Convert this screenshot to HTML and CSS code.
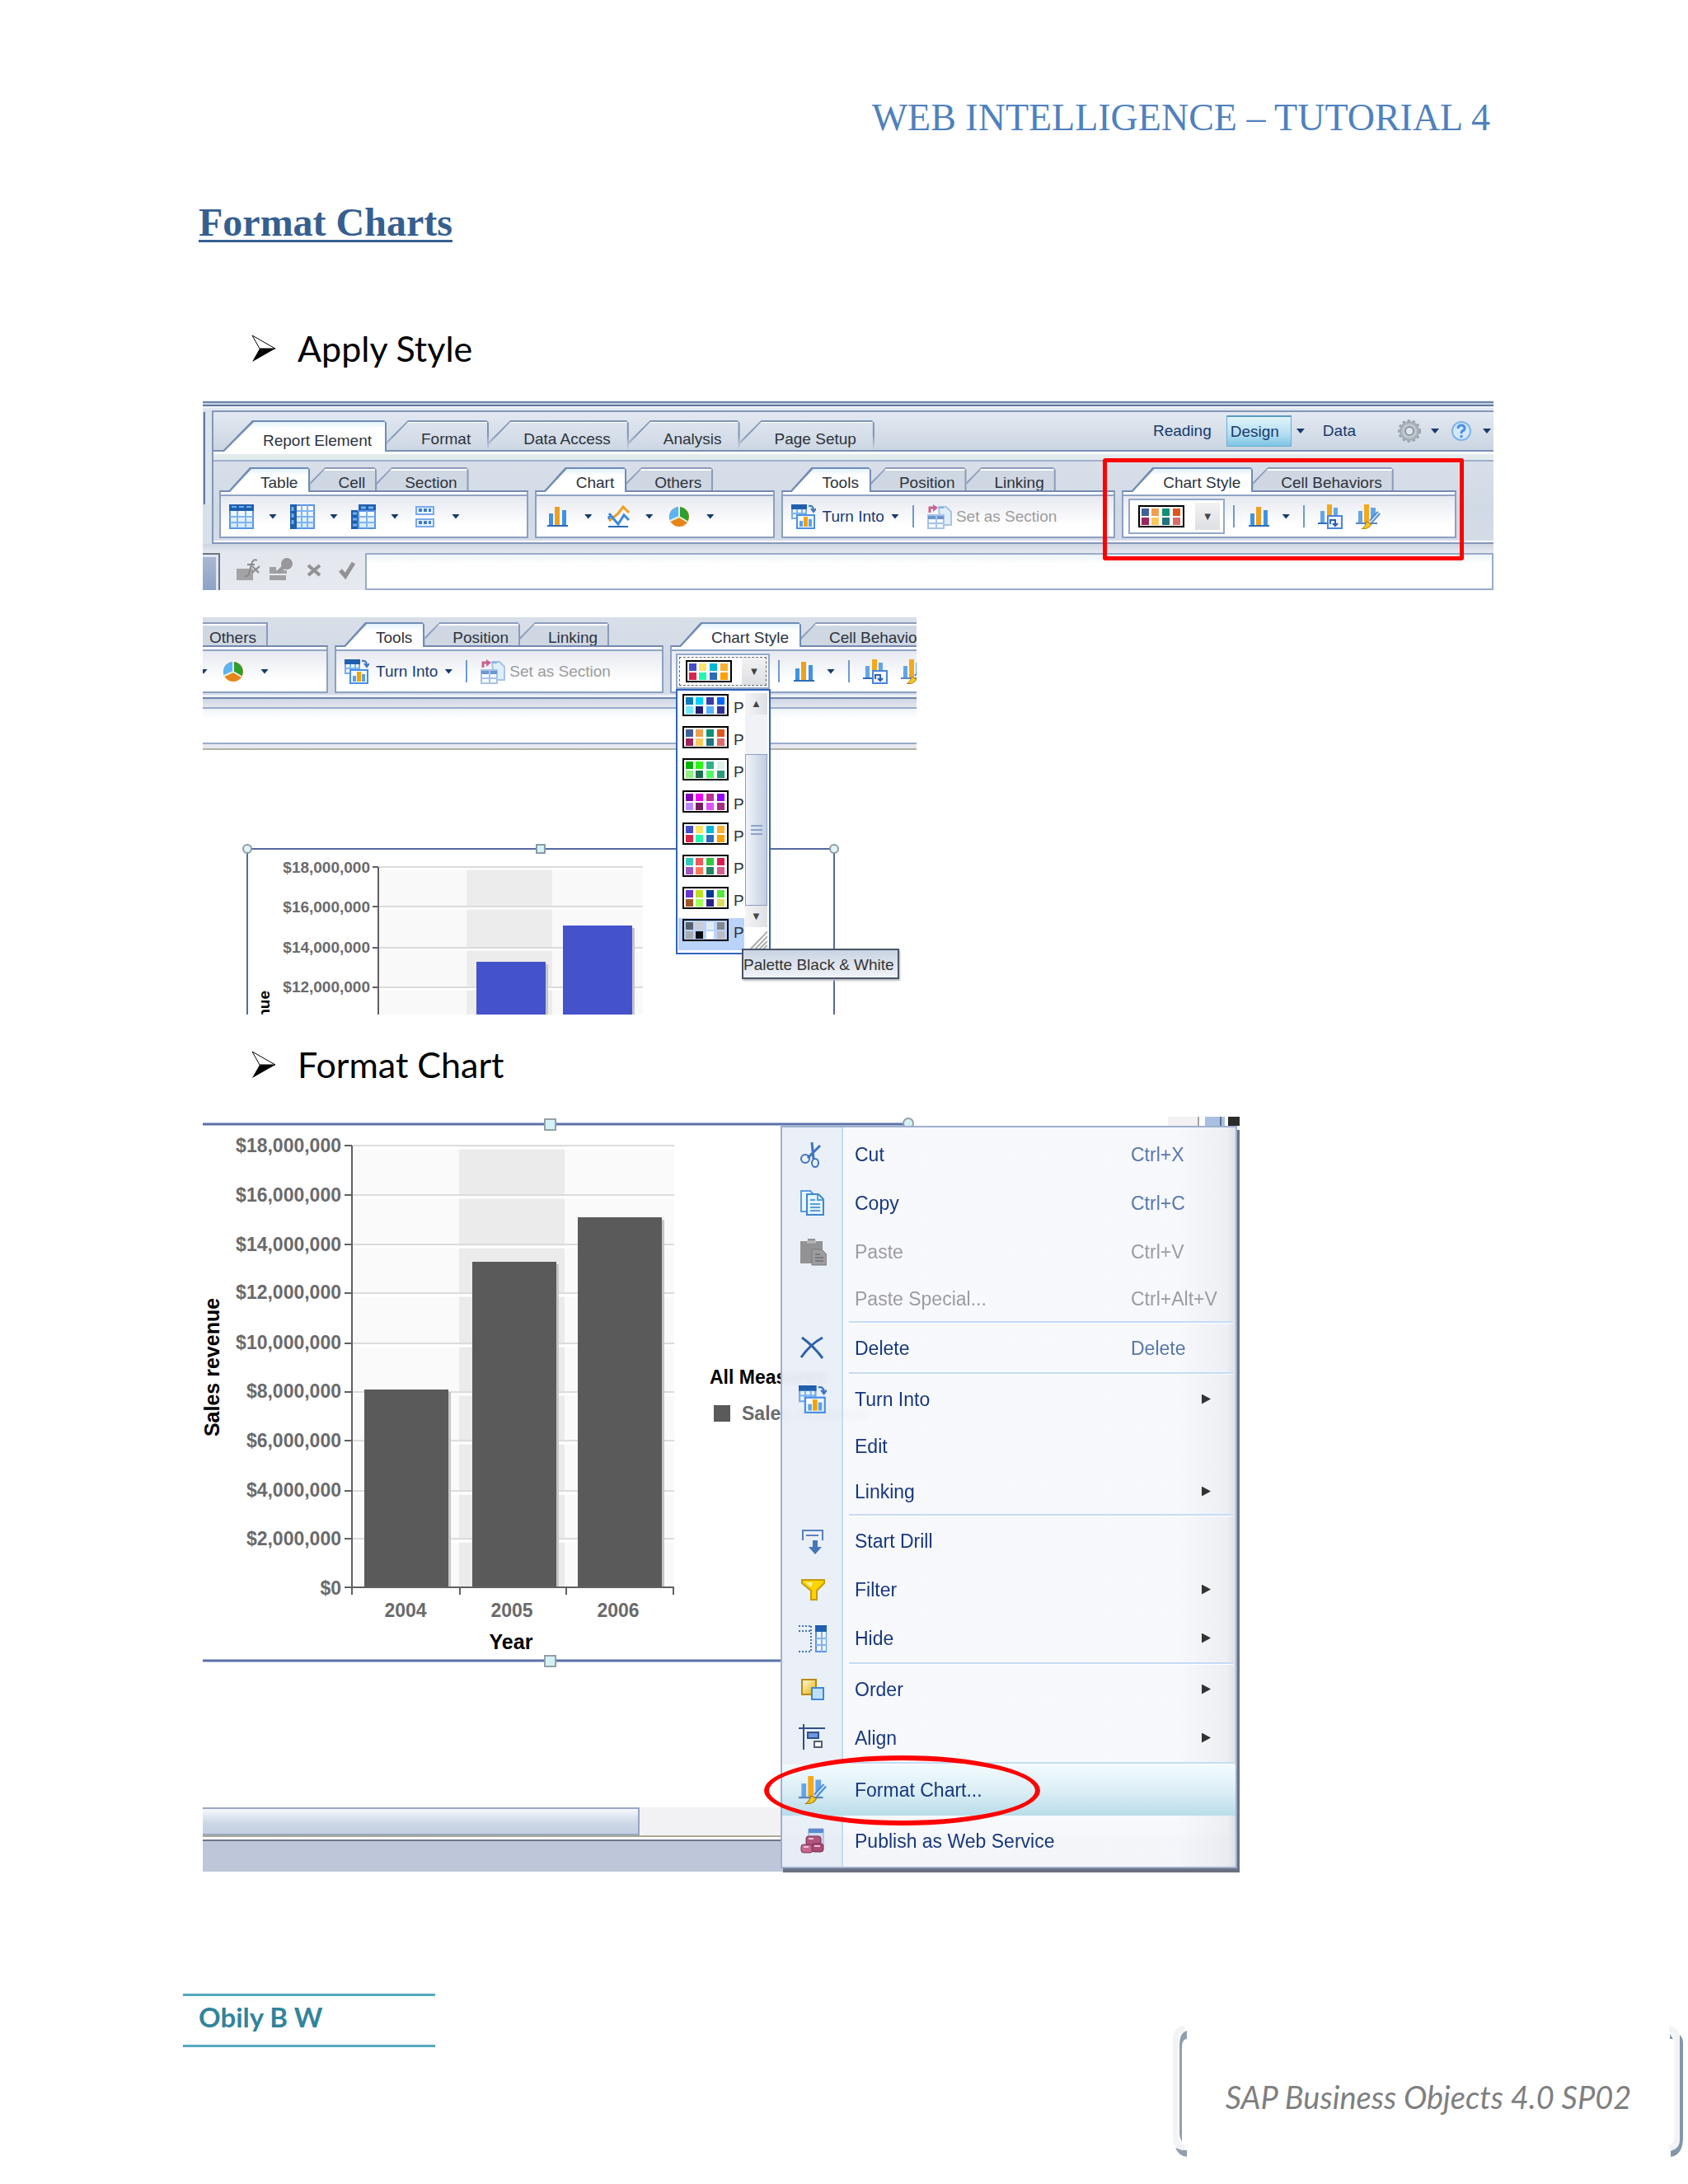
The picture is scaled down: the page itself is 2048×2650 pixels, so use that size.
FILE: index.html
```html
<!DOCTYPE html>
<html lang="en">
<head>
<meta charset="utf-8">
<meta name="viewport" content="width=device-width, initial-scale=1">
<title>Web Intelligence – Tutorial 4</title>
<link rel="stylesheet" href="styles.css">
</head>
<body>
<svg class="defs" width="0" height="0" aria-hidden="true">
  <defs>
    <linearGradient id="gCell" x1="0" y1="0" x2="0" y2="1"><stop offset="0" stop-color="#ffffff"/><stop offset="1" stop-color="#cfe8fb"/></linearGradient>
    <linearGradient id="gGold" x1="0" y1="0" x2="1" y2="1"><stop offset="0" stop-color="#fffbe0"/><stop offset="1" stop-color="#e6b000"/></linearGradient>
    <radialGradient id="gGear"><stop offset="0" stop-color="#f4f6f8"/><stop offset="1" stop-color="#a6b0ba"/></radialGradient>
  </defs>
  <symbol id="i-table" viewBox="0 0 30 30"><rect x="1" y="1" width="28" height="28" fill="url(#gCell)" stroke="#5b93e6" stroke-width="2"/><rect x="0" y="0" width="30" height="8" fill="#1f5fae"/><path d="M3 3h6M12 3h6M21 3h6" stroke="#6fb0f0" stroke-width="2"/><path d="M10 8v21M20 8v21M1 15h28M1 22h28" stroke="#7fb4f0" stroke-width="2"/></symbol>
  <symbol id="i-vtable" viewBox="0 0 30 30"><rect x="1" y="1" width="28" height="28" fill="url(#gCell)" stroke="#5b93e6" stroke-width="2"/><rect x="0" y="0" width="8" height="30" fill="#1f5fae"/><path d="M3 3v5M3 11v5M3 19v5" stroke="#6fb0f0" stroke-width="3"/><path d="M14 1v28M21 1v28M8 8h21M8 15h21M8 22h21" stroke="#7fb4f0" stroke-width="2"/></symbol>
  <symbol id="i-crosstab" viewBox="0 0 30 30"><path d="M9 0h21v8h-21zM0 7h9v23h-9z" fill="#1f5fae"/><rect x="9" y="8" width="20" height="21" fill="url(#gCell)" stroke="#5b93e6" stroke-width="2"/><path d="M12 4h6M21 4h6M2 11h5M2 18h5M2 25h5" stroke="#6fb0f0" stroke-width="3"/><path d="M19 8v21M9 15h20M9 22h20" stroke="#7fb4f0" stroke-width="2"/></symbol>
  <symbol id="i-form" viewBox="0 0 30 30"><path d="M5 3h21v9H5zM5 18h21v9H5z" fill="#eaf5ff" stroke="#7aa9ea" stroke-width="2"/><path d="M8 7h4M14 7h4M20 7h3M8 22h4M14 22h4M20 22h3" stroke="#3f7cc8" stroke-width="4"/></symbol>
  <symbol id="i-bars" viewBox="0 0 30 30"><path d="M5 11h5v14H5zM21 7h5v18h-5z" fill="#3f92e6"/><path d="M12 3h6v22h-6z" fill="#f0a020"/><path d="M3 26h25" stroke="#2b6cb8" stroke-width="2"/></symbol>
  <symbol id="i-line" viewBox="0 0 30 30"><path d="M4 20l5-4 6-5 6-8 7 7" fill="none" stroke="#f0a020" stroke-width="3"/><path d="M4 11l5 6 6 7 7-11 6 6M4 18v-4" fill="none" stroke="#3f88dc" stroke-width="3"/><path d="M3 27h24" stroke="#2b6cb8" stroke-width="2"/></symbol>
  <symbol id="i-pie" viewBox="0 0 30 30"><circle cx="15" cy="15" r="12" fill="#e8851a"/><path d="M15 15V3a12 12 0 0 1 10 18z" fill="#2e9e2e"/><path d="M15 15V3A12 12 0 0 0 4 20z" fill="#5db4f2"/><path d="M15 3v12l10 6M15 15L4 20" fill="none" stroke="#e6f6e0" stroke-width="2"/></symbol>
  <symbol id="i-turn" viewBox="0 0 30 30"><rect x="1" y="1" width="17" height="16" fill="#eaf5ff" stroke="#7aa9ea" stroke-width="2"/><path d="M0 0h19v6H0z" fill="#1f5fae"/><path d="M7 6v11M13 6v11M1 11h17" stroke="#7fb4f0" stroke-width="2"/><path d="M21 2q6-1 6 5M24 5l3 4 3-4" fill="none" stroke="#3a74c4" stroke-width="2"/><rect x="7" y="13" width="21" height="16" fill="#f4faff" stroke="#4a90e8" stroke-width="2"/><path d="M10 20h4v7h-4zM21 18h4v9h-4z" fill="#5aa3ea"/><path d="M15 15h5v12h-5z" fill="#f5a300"/></symbol>
  <symbol id="i-setsec" viewBox="0 0 30 30"><path d="M14 3h9l6 6v16H16z" fill="#dfeefa" stroke="#a9c2e4" stroke-width="2"/><path d="M14 4h6" stroke="#7fb4f0" stroke-width="2"/><path d="M3 10V4h5" fill="none" stroke="#c8648c" stroke-width="3"/><path d="M7 0l6 4-6 5z" fill="#c8648c"/><rect x="1" y="13" width="19" height="16" fill="#f4faff" stroke="#a9c2e4" stroke-width="2"/><path d="M1 16h19" stroke="#6a96d2" stroke-width="4"/><path d="M11 13v16M1 23h19" stroke="#a9c2e4" stroke-width="2"/></symbol>
  <symbol id="i-barsexp" viewBox="0 0 30 30"><path d="M3 8h5v14H3zM19 4h5v12h-5z" fill="#62a6e8"/><path d="M11 0h6v22h-6z" fill="#f5a81c"/><path d="M0 23h14" stroke="#2b6cb8" stroke-width="2"/><rect x="12" y="14" width="17" height="15" fill="#f0f7ff" stroke="#4a86d8" stroke-width="2"/><path d="M15 24v-5h6v6M18 23l3 3 3-3" fill="none" stroke="#2f5fa8" stroke-width="2"/></symbol>
  <symbol id="i-barsfmt" viewBox="0 0 30 30"><path d="M3 8h5v14H3zM18 4h6v14h-6z" fill="#62a6e8"/><path d="M10 0h6v22h-6z" fill="#f5a81c"/><path d="M0 23h26" stroke="#5b86c0" stroke-width="2"/><path d="M28 10l-10 11" stroke="#3f7fd0" stroke-width="5"/><path d="M28 10l-10 11" stroke="#bfe0fb" stroke-width="2"/><path d="M13 21l6 3q-3 6-12 6 5-3 6-9z" fill="#f7c81e" stroke="#a87a10" stroke-width="1"/></symbol>
  <symbol id="i-gear" viewBox="0 0 30 30"><circle cx="15" cy="15" r="12" fill="none" stroke="#98a2ac" stroke-width="4" stroke-dasharray="3 3"/><circle cx="15" cy="15" r="11" fill="url(#gGear)" stroke="#a2acb6" stroke-width="2"/><circle cx="15" cy="15" r="5" fill="#dfe5ec" stroke="#8a949e" stroke-width="2"/></symbol>
  <symbol id="i-help" viewBox="0 0 30 30"><circle cx="15" cy="15" r="11" fill="#d3e8fb" stroke="#7fb2ea" stroke-width="2"/><path d="M11 12q0-4 4-4t4 4q0 2-3 3-1 1-1 3" fill="none" stroke="#4a8fe0" stroke-width="3"/><path d="M15 20v3" stroke="#4a8fe0" stroke-width="3"/></symbol>
  <symbol id="i-fx" viewBox="0 0 30 30"><path d="M1 14h20v14H1z" fill="#a3a3a5"/><path d="M26 4q-5-3-7 5l-3 11q-1 4-5 3M14 9h9M20 11l8 8M29 11l-9 8" fill="none" stroke="#8a8a8d" stroke-width="2"/></symbol>
  <symbol id="i-valid" viewBox="0 0 30 30"><path d="M1 12h8v4h13v4H1zM1 22h20v6H1z" fill="#a0a0a3"/><path d="M12 18l9-9" stroke="#98989b" stroke-width="5"/><circle cx="22" cy="8" r="7" fill="#98989b"/></symbol>
  <symbol id="i-x" viewBox="0 0 30 30"><path d="M8 10l14 12M22 10L8 22" stroke="#929295" stroke-width="4"/></symbol>
  <symbol id="i-check" viewBox="0 0 30 30"><path d="M7 16l6 7L23 7" fill="none" stroke="#929295" stroke-width="5"/></symbol>
  <symbol id="i-cut" viewBox="0 0 34 34"><path d="M16 2l2 20M26 6L11 21" stroke="#3f74c0" stroke-width="3"/><circle cx="8" cy="22" r="5" fill="none" stroke="#3f74c0" stroke-width="2"/><ellipse cx="20" cy="27" rx="4" ry="5" fill="none" stroke="#3f74c0" stroke-width="2"/></symbol>
  <symbol id="i-copy" viewBox="0 0 34 34"><path d="M3 2h11l5 5v20H3z" fill="#e8f6ff" stroke="#5a9cdc" stroke-width="2"/><path d="M10 6h14l6 6v19H10z" fill="#e2f5fd" stroke="#3f86cc" stroke-width="2"/><path d="M23 6v7h7M14 13h6M14 18h12M14 22h12M14 26h12" fill="none" stroke="#5a9cdc" stroke-width="2"/></symbol>
  <symbol id="i-paste" viewBox="0 0 34 34"><path d="M2 4h9V1h9v3h9v27H2z" fill="#929294"/><path d="M10 5h11" stroke="#b8b8ba" stroke-width="3"/><path d="M16 14h12l6 6v13H16z" fill="#9c9c9e" stroke="#7a7a7c" stroke-width="1"/><path d="M20 20h6M20 24h10M20 28h10" stroke="#7a7a7c" stroke-width="2"/></symbol>
  <symbol id="i-delete" viewBox="0 0 34 34"><path d="M4 4q14 10 25 25M29 4Q14 12 3 28" fill="none" stroke="#2f62a8" stroke-width="3"/></symbol>
  <symbol id="i-drill" viewBox="0 0 34 34"><path d="M5 16V4h24v12M9 10h15" fill="none" stroke="#5a7fc0" stroke-width="2"/><path d="M17 16h6v8h5l-8 9-8-9h5z" fill="#4577bd"/></symbol>
  <symbol id="i-filter" viewBox="0 0 34 34"><path d="M4 5h27v4l-9 9v11h-7V18L4 9z" fill="#ffd400" stroke="#c79a10" stroke-width="2"/><path d="M8 8h9l-2 6z" fill="#fff29a"/></symbol>
  <symbol id="i-hide" viewBox="0 0 34 34"><path d="M0 2h16M0 8h16M15 2v31M0 33h16" fill="none" stroke="#3f74c0" stroke-width="2" stroke-dasharray="2 2"/><rect x="21" y="2" width="13" height="31" fill="#eaf5ff" stroke="#5b93e6" stroke-width="2"/><path d="M20 1h14v8H20z" fill="#1f5fae"/><path d="M28 9v24M21 17h13M21 25h13" stroke="#7fb4f0" stroke-width="2"/></symbol>
  <symbol id="i-order" viewBox="0 0 34 34"><rect x="4" y="5" width="17" height="18" fill="url(#gGold)" stroke="#b98a10" stroke-width="2"/><rect x="16" y="15" width="14" height="14" fill="#bfe0fd" stroke="#3f86e0" stroke-width="2"/></symbol>
  <symbol id="i-align" viewBox="0 0 34 34"><path d="M0 5h32M6 0v31" stroke="#2f4f8a" stroke-width="2"/><path d="M11 10h13v7H11z" fill="#6b98e0" stroke="#33508a" stroke-width="2"/><path d="M19 21h9v7h-9z" fill="#fff" stroke="#555a70" stroke-width="2"/></symbol>
  <symbol id="i-publish" viewBox="0 0 34 34"><path d="M12 2h18v22H12z" fill="#cfdcf0" stroke="#8aa6d6" stroke-width="1"/><path d="M12 2h18v5H12z" fill="#5b8ad0"/><rect x="9" y="11" width="18" height="11" rx="3" fill="#b2557c" stroke="#7c2c50"/><rect x="3" y="21" width="14" height="10" rx="3" fill="#c4688e" stroke="#7c2c50"/><rect x="16" y="20" width="14" height="10" rx="3" fill="#a84a72" stroke="#7c2c50"/><path d="M6 24h6M19 23h7M12 14h6" stroke="#efc0d4" stroke-width="2"/></symbol>
</svg>

<header class="doc-header">Web Intelligence – Tutorial 4</header>

<main class="doc">
  <h1 class="doc-title">Format Charts</h1>

  <h2 class="point">
    <svg class="point-mark" viewBox="0 0 30 34" aria-hidden="true"><path d="M1 1l28 16H10z" fill="#fff" stroke="#000" stroke-width="1"/><path d="M10 17h19L1 33z"/></svg>
    Apply Style
  </h2>

  <figure class="shot shot-ribbon">
    <div class="window-edge"></div>
    <div class="ribbon-row">
      <div class="side-edge"></div>
      <div class="panel">
        <div class="main-tabs">
          <div class="tablist" role="tablist">
            <button class="tab tab-main is-on" role="tab" aria-selected="true">Report Element</button>
            <button class="tab tab-main" role="tab">Format</button>
            <button class="tab tab-main" role="tab">Data Access</button>
            <button class="tab tab-main" role="tab">Analysis</button>
            <button class="tab tab-main" role="tab">Page Setup</button>
          </div>
          <div class="modes">
            <button class="mode">Reading</button>
            <button class="mode mode-on">Design</button>
            <button class="caret" aria-label="Design options"></button>
            <button class="mode mode-data">Data</button>
            <button class="util" aria-label="Settings"><svg class="icon"><use href="#i-gear"/></svg><span class="caret"></span></button>
            <button class="util" aria-label="Help"><svg class="icon"><use href="#i-help"/></svg><span class="caret"></span></button>
          </div>
        </div>
        <div class="panel-strip"></div>
        <div class="groups">
          <section class="group group-a">
            <div class="tablist group-tabs" role="tablist"><button class="tab is-on" role="tab">Table</button><button class="tab" role="tab">Cell</button><button class="tab" role="tab">Section</button></div>
            <div class="group-body">
              <button class="tool" aria-label="Table"><svg class="icon"><use href="#i-table"/></svg><span class="caret"></span></button>
              <button class="tool" aria-label="Vertical table"><svg class="icon"><use href="#i-vtable"/></svg><span class="caret"></span></button>
              <button class="tool" aria-label="Cross table"><svg class="icon"><use href="#i-crosstab"/></svg><span class="caret"></span></button>
              <button class="tool" aria-label="Form"><svg class="icon"><use href="#i-form"/></svg><span class="caret"></span></button>
            </div>
          </section>
          <section class="group group-b">
            <div class="tablist group-tabs" role="tablist"><button class="tab is-on" role="tab">Chart</button><button class="tab" role="tab">Others</button></div>
            <div class="group-body">
              <button class="tool" aria-label="Column chart"><svg class="icon"><use href="#i-bars"/></svg><span class="caret"></span></button>
              <button class="tool" aria-label="Line chart"><svg class="icon"><use href="#i-line"/></svg><span class="caret"></span></button>
              <button class="tool" aria-label="Pie chart"><svg class="icon"><use href="#i-pie"/></svg><span class="caret"></span></button>
            </div>
          </section>
          <section class="group group-c">
            <div class="tablist group-tabs" role="tablist"><button class="tab is-on" role="tab">Tools</button><button class="tab" role="tab">Position</button><button class="tab" role="tab">Linking</button></div>
            <div class="group-body">
              <button class="tool tool-text"><svg class="icon"><use href="#i-turn"/></svg>Turn Into<span class="caret"></span></button>
              <span class="sep"></span>
              <button class="tool tool-text is-off" disabled><svg class="icon"><use href="#i-setsec"/></svg>Set as Section</button>
            </div>
          </section>
          <section class="group group-c">
            <div class="tablist group-tabs" role="tablist"><button class="tab is-on" role="tab">Chart Style</button><button class="tab" role="tab">Cell Behaviors</button></div>
            <div class="group-body group-style">
              <button class="combo" aria-haspopup="listbox" aria-label="Palette">
                <svg class="palette" viewBox="0 0 56 27"><rect class="frame" x="1" y="1" width="54" height="25"/><rect x="4" y="4" width="9" height="9" fill="#3d6199"/><rect x="16" y="4" width="9" height="9" fill="#eda050"/><rect x="29" y="4" width="9" height="9" fill="#0d9274"/><rect x="42" y="4" width="9" height="9" fill="#e0561c"/><rect x="4" y="15" width="9" height="9" fill="#9c245e"/><rect x="16" y="15" width="9" height="9" fill="#fcc95a"/><rect x="29" y="15" width="9" height="9" fill="#1f7480"/><rect x="42" y="15" width="9" height="9" fill="#dc6a6a"/></svg>
                <span class="drop">▼</span>
              </button>
              <span class="sep"></span>
              <button class="tool" aria-label="Chart areas"><svg class="icon"><use href="#i-bars"/></svg><span class="caret"></span></button>
              <span class="sep"></span>
              <button class="tool" aria-label="Import chart style"><svg class="icon"><use href="#i-barsexp"/></svg></button>
              <button class="tool" aria-label="Format chart"><svg class="icon"><use href="#i-barsfmt"/></svg></button>
            </div>
            <span class="mark-box"></span>
          </section>
        </div>
      </div>
    </div>
    <div class="formula">
      <span class="formula-corner"></span>
      <div class="formula-tools">
        <button aria-label="Formula editor"><svg class="icon"><use href="#i-fx"/></svg></button>
        <button aria-label="Create variable"><svg class="icon"><use href="#i-valid"/></svg></button>
        <button aria-label="Cancel"><svg class="icon"><use href="#i-x"/></svg></button>
        <button aria-label="Validate"><svg class="icon"><use href="#i-check"/></svg></button>
      </div>
      <input class="formula-input" type="text" aria-label="Formula">
    </div>
  </figure>

  <figure class="shot shot-palette">
    <div class="groups groups-cut">
      <section class="group group-left">
        <div class="tablist group-tabs" role="tablist"><button class="tab tab-cut" role="tab">Others</button></div>
        <div class="group-body">
          <span class="caret"></span>
          <button class="tool" aria-label="Pie chart"><svg class="icon"><use href="#i-pie"/></svg><span class="caret"></span></button>
        </div>
      </section>
      <section class="group group-mid">
        <div class="tablist group-tabs" role="tablist"><button class="tab is-on" role="tab">Tools</button><button class="tab" role="tab">Position</button><button class="tab" role="tab">Linking</button></div>
        <div class="group-body">
          <button class="tool tool-text"><svg class="icon"><use href="#i-turn"/></svg>Turn Into<span class="caret"></span></button>
          <span class="sep"></span>
          <button class="tool tool-text is-off" disabled><svg class="icon"><use href="#i-setsec"/></svg>Set as Section</button>
        </div>
      </section>
      <section class="group group-right">
        <div class="tablist group-tabs" role="tablist"><button class="tab is-on" role="tab">Chart Style</button><button class="tab" role="tab">Cell Behaviors</button></div>
        <div class="group-body group-style">
          <button class="combo combo-focus" aria-haspopup="listbox" aria-expanded="true" aria-label="Palette">
            <svg class="palette" viewBox="0 0 56 27"><rect class="frame" x="1" y="1" width="54" height="25"/><rect x="4" y="4" width="9" height="9" fill="#464fc8"/><rect x="16" y="4" width="9" height="9" fill="#fae468"/><rect x="29" y="4" width="9" height="9" fill="#00b8d4"/><rect x="42" y="4" width="9" height="9" fill="#fbb034"/><rect x="4" y="15" width="9" height="9" fill="#dc2448"/><rect x="16" y="15" width="9" height="9" fill="#22f8ac"/><rect x="29" y="15" width="9" height="9" fill="#2c6cb8"/><rect x="42" y="15" width="9" height="9" fill="#ffa000"/></svg>
            <span class="drop">▼</span>
          </button>
          <span class="sep"></span>
          <button class="tool" aria-label="Chart areas"><svg class="icon"><use href="#i-bars"/></svg><span class="caret"></span></button>
          <span class="sep"></span>
          <button class="tool" aria-label="Import chart style"><svg class="icon"><use href="#i-barsexp"/></svg></button>
          <button class="tool" aria-label="Format chart"><svg class="icon"><use href="#i-barsfmt"/></svg></button>
        </div>
      </section>
    </div>
    <div class="formula formula-cut"><input class="formula-input" type="text" aria-label="Formula"></div>

    <svg class="chart" width="866" height="321" viewBox="0 0 866 321" role="img" aria-label="Sales revenue by year">
      <path d="M54 321V120H766V321" fill="none" stroke="#56699f" stroke-width="2"/>
      <rect x="214" y="142" width="320" height="179" fill="#faf9fa"/>
      <rect x="320" y="142" width="104" height="179" fill="#edecec"/>
      <path d="M214 144h320M214 192h320M214 242h320M214 290h320" stroke="#fff" stroke-width="3"/>
      <path d="M214 142h320M214 190h320M214 240h320M214 288h320" stroke="#dcdbdc" stroke-width="2"/>
      <path d="M335 260h84v61h-84zM440 216h84v105h-84z" fill="#c4c6cc"/>
      <path d="M332 257h84v64h-84zM437 213h84v108h-84z" fill="#4453cb"/>
      <path d="M213 321V142M206 142h7M206 190h7M206 240h7M206 288h7" fill="none" stroke="#606062" stroke-width="2"/>
      <g class="scale scale-s"><text x="203" y="149">$18,000,000</text><text x="203" y="197">$16,000,000</text><text x="203" y="246">$14,000,000</text><text x="203" y="294">$12,000,000</text></g>
      <text class="axis-name axis-name-s" transform="translate(81 292) rotate(-90)" text-anchor="end">nue</text>
      <g fill="#e2f3f4" stroke="#8b9ba6" stroke-width="2"><circle cx="54" cy="120" r="5"/><circle cx="766" cy="120" r="5"/><rect x="405" y="115" width="10" height="10" fill="#d4f2f6"/></g>
    </svg>

    <div class="dropdown">
      <ul class="options" role="listbox" aria-label="Palettes">
        <li role="option"><svg class="palette" viewBox="0 0 56 27"><rect class="frame" x="1" y="1" width="54" height="25"/><rect x="4" y="4" width="9" height="9" fill="#087cb8"/><rect x="16" y="4" width="9" height="9" fill="#00d0ff"/><rect x="29" y="4" width="9" height="9" fill="#3a3aa8"/><rect x="42" y="4" width="9" height="9" fill="#0068ff"/><rect x="4" y="15" width="9" height="9" fill="#70e8ff"/><rect x="16" y="15" width="9" height="9" fill="#1e1e70"/><rect x="29" y="15" width="9" height="9" fill="#58b0ff"/><rect x="42" y="15" width="9" height="9" fill="#3030a0"/></svg><span>P</span></li>
        <li role="option"><svg class="palette" viewBox="0 0 56 27"><rect class="frame" x="1" y="1" width="54" height="25"/><rect x="4" y="4" width="9" height="9" fill="#3d6199"/><rect x="16" y="4" width="9" height="9" fill="#eda050"/><rect x="29" y="4" width="9" height="9" fill="#0d9274"/><rect x="42" y="4" width="9" height="9" fill="#e0561c"/><rect x="4" y="15" width="9" height="9" fill="#9c245e"/><rect x="16" y="15" width="9" height="9" fill="#fcc95a"/><rect x="29" y="15" width="9" height="9" fill="#1f7480"/><rect x="42" y="15" width="9" height="9" fill="#dc6a6a"/></svg><span>P</span></li>
        <li role="option"><svg class="palette" viewBox="0 0 56 27"><rect class="frame" x="1" y="1" width="54" height="25"/><rect x="4" y="4" width="9" height="9" fill="#00b400"/><rect x="16" y="4" width="9" height="9" fill="#28fa10"/><rect x="29" y="4" width="9" height="9" fill="#30b088"/><rect x="42" y="4" width="9" height="9" fill="#dcf2e8"/><rect x="4" y="15" width="9" height="9" fill="#90f080"/><rect x="16" y="15" width="9" height="9" fill="#1c7050"/><rect x="29" y="15" width="9" height="9" fill="#50fa60"/><rect x="42" y="15" width="9" height="9" fill="#289c78"/></svg><span>P</span></li>
        <li role="option"><svg class="palette" viewBox="0 0 56 27"><rect class="frame" x="1" y="1" width="54" height="25"/><rect x="4" y="4" width="9" height="9" fill="#8400b8"/><rect x="16" y="4" width="9" height="9" fill="#f000f8"/><rect x="29" y="4" width="9" height="9" fill="#c03090"/><rect x="42" y="4" width="9" height="9" fill="#9400ff"/><rect x="4" y="15" width="9" height="9" fill="#b888ff"/><rect x="16" y="15" width="9" height="9" fill="#781c60"/><rect x="29" y="15" width="9" height="9" fill="#e050fa"/><rect x="42" y="15" width="9" height="9" fill="#a82c80"/></svg><span>P</span></li>
        <li role="option"><svg class="palette" viewBox="0 0 56 27"><rect class="frame" x="1" y="1" width="54" height="25"/><rect x="4" y="4" width="9" height="9" fill="#464fc8"/><rect x="16" y="4" width="9" height="9" fill="#fae468"/><rect x="29" y="4" width="9" height="9" fill="#00b8d4"/><rect x="42" y="4" width="9" height="9" fill="#fbb034"/><rect x="4" y="15" width="9" height="9" fill="#dc2448"/><rect x="16" y="15" width="9" height="9" fill="#22f8ac"/><rect x="29" y="15" width="9" height="9" fill="#2c6cb8"/><rect x="42" y="15" width="9" height="9" fill="#ffa000"/></svg><span>P</span></li>
        <li role="option"><svg class="palette" viewBox="0 0 56 27"><rect class="frame" x="1" y="1" width="54" height="25"/><rect x="4" y="4" width="9" height="9" fill="#34c8b8"/><rect x="16" y="4" width="9" height="9" fill="#f05858"/><rect x="29" y="4" width="9" height="9" fill="#34c840"/><rect x="42" y="4" width="9" height="9" fill="#dc1c50"/><rect x="4" y="15" width="9" height="9" fill="#a058c0"/><rect x="16" y="15" width="9" height="9" fill="#ff7860"/><rect x="29" y="15" width="9" height="9" fill="#208860"/><rect x="42" y="15" width="9" height="9" fill="#d85c90"/></svg><span>P</span></li>
        <li role="option"><svg class="palette" viewBox="0 0 56 27"><rect class="frame" x="1" y="1" width="54" height="25"/><rect x="4" y="4" width="9" height="9" fill="#6a34cc"/><rect x="16" y="4" width="9" height="9" fill="#bce020"/><rect x="29" y="4" width="9" height="9" fill="#003898"/><rect x="42" y="4" width="9" height="9" fill="#54e83c"/><rect x="4" y="15" width="9" height="9" fill="#a05424"/><rect x="16" y="15" width="9" height="9" fill="#a0ff58"/><rect x="29" y="15" width="9" height="9" fill="#2c2088"/><rect x="42" y="15" width="9" height="9" fill="#dcdc60"/></svg><span>P</span></li>
        <li role="option" class="chosen" aria-selected="true"><svg class="palette" viewBox="0 0 56 27"><rect class="frame frame-chosen" x="1" y="1" width="54" height="25"/><rect x="4" y="4" width="9" height="9" fill="#58606a"/><rect x="16" y="4" width="9" height="9" fill="#c8ccd4"/><rect x="29" y="4" width="9" height="9" fill="#e4ecf0"/><rect x="42" y="4" width="9" height="9" fill="#84868a"/><rect x="4" y="15" width="9" height="9" fill="#a8aab0"/><rect x="16" y="15" width="9" height="9" fill="#0c0e14"/><rect x="29" y="15" width="9" height="9" fill="#fff"/><rect x="42" y="15" width="9" height="9" fill="#bcbcbe"/></svg><span>P</span></li>
      </ul>
      <div class="scrollbar" aria-hidden="true">
        <span class="scroll-btn">▲</span>
        <span class="scroll-track"><span class="scroll-thumb"><i></i><i></i><i></i></span></span>
        <span class="scroll-btn">▼</span>
        <svg class="grip" viewBox="0 0 28 28"><path d="M6 28L28 5M12 28L28 11M17 28L28 17M22 28L28 22" stroke="#a8a8a8" stroke-width="2"/></svg>
      </div>
    </div>
    <div class="tooltip" role="tooltip">Palette Black &amp; White</div>
  </figure>

  <h2 class="point point-second">
    <svg class="point-mark" viewBox="0 0 30 34" aria-hidden="true"><path d="M1 1l28 16H10z" fill="#fff" stroke="#000" stroke-width="1"/><path d="M10 17h19L1 33z"/></svg>
    Format Chart
  </h2>

  <figure class="shot shot-menu">
    <svg class="chart" width="1258" height="838" viewBox="0 0 1258 838" role="img" aria-label="Sales revenue by year, 2004 to 2006">
      <path d="M0 9h856M0 660h705" stroke="#5a70a8" stroke-width="3"/>
      <rect x="182" y="35" width="390" height="536" fill="#fafafb"/>
      <rect x="311" y="35" width="128" height="536" fill="#ebebec"/>
      <path d="M182 38h390M182 98h390M182 158h390M182 217h390M182 278h390M182 337h390M182 396h390M182 457h390M182 515h390" stroke="#fff" stroke-width="3"/>
      <path d="M182 35h390M182 95h390M182 155h390M182 214h390M182 275h390M182 334h390M182 393h390M182 454h390M182 512h390" stroke="#dcdcdd" stroke-width="2"/>
      <path d="M199 334h102v237h-102zM330 179h102v392h-102zM458 125h102v446h-102z" fill="#c6c6c8"/>
      <path d="M196 331h102v240h-102zM327 176h102v395h-102zM455 122h102v449h-102z" fill="#5a5a5b"/>
      <path d="M181 580V35M172 35h9M172 95h9M172 155h9M172 214h9M172 275h9M172 334h9M172 393h9M172 454h9M172 512h9M172 571h400M312 571v9M441 571v9M571 571v9" fill="none" stroke="#606062" stroke-width="2"/>
      <g class="scale"><text x="168" y="43">$18,000,000</text><text x="168" y="103">$16,000,000</text><text x="168" y="163">$14,000,000</text><text x="168" y="221">$12,000,000</text><text x="168" y="282">$10,000,000</text><text x="168" y="341">$8,000,000</text><text x="168" y="401">$6,000,000</text><text x="168" y="461">$4,000,000</text><text x="168" y="520">$2,000,000</text><text x="168" y="580">$0</text></g>
      <g class="cats"><text x="246" y="607">2004</text><text x="375" y="607">2005</text><text x="504" y="607">2006</text></g>
      <text class="axis-name axis-name-x" x="374" y="646" text-anchor="middle">Year</text>
      <text class="axis-name axis-name-y" transform="translate(20 304) rotate(-90)" text-anchor="middle">Sales revenue</text>
      <text class="axis-name" x="615" y="324">All Measures</text>
      <rect x="620" y="350" width="20" height="20" fill="#5a5a5b"/>
      <text class="legend" x="654" y="368">Sales revenue</text>
      <g fill="#d4f2f6" stroke="#96a0a8" stroke-width="2"><rect x="415" y="3" width="13" height="13"/><rect x="415" y="654" width="13" height="13"/><circle cx="856" cy="8" r="6"/></g>
      <path d="M1171 0h36v11h-36z" fill="#f3f1f2"/><path d="M1207 0h2v11h-2z" fill="#a8a4a8"/><path d="M1216 0h24v11h-24z" fill="#a9c0e0"/><path d="M1234 0h2v11h-2z" fill="#5f7294"/><path d="M1244 0h14v11h-14z" fill="#2c2c2e"/>
    </svg>
    <div class="hscroll" aria-hidden="true"><span class="hscroll-thumb"></span></div>
    <div class="statusbar"></div>

    <div class="menu" role="menu">
      <button role="menuitem"><svg><use href="#i-cut"/></svg><span>Cut</span><kbd>Ctrl+X</kbd></button>
      <button role="menuitem"><svg><use href="#i-copy"/></svg><span>Copy</span><kbd>Ctrl+C</kbd></button>
      <button role="menuitem" disabled><svg><use href="#i-paste"/></svg><span>Paste</span><kbd>Ctrl+V</kbd></button>
      <button role="menuitem" class="plain" disabled><span>Paste Special...</span><kbd>Ctrl+Alt+V</kbd></button>
      <hr>
      <button role="menuitem"><svg><use href="#i-delete"/></svg><span>Delete</span><kbd>Delete</kbd></button>
      <hr>
      <button role="menuitem"><svg><use href="#i-turn"/></svg><span>Turn Into</span><i class="more"></i></button>
      <button role="menuitem" class="plain"><span>Edit</span></button>
      <button role="menuitem" class="plain"><span>Linking</span><i class="more"></i></button>
      <hr>
      <button role="menuitem"><svg><use href="#i-drill"/></svg><span>Start Drill</span></button>
      <button role="menuitem"><svg><use href="#i-filter"/></svg><span>Filter</span><i class="more"></i></button>
      <button role="menuitem"><svg><use href="#i-hide"/></svg><span>Hide</span><i class="more"></i></button>
      <hr>
      <button role="menuitem"><svg><use href="#i-order"/></svg><span>Order</span><i class="more"></i></button>
      <button role="menuitem"><svg><use href="#i-align"/></svg><span>Align</span><i class="more"></i></button>
      <hr>
      <button role="menuitem" class="hover"><svg><use href="#i-barsfmt"/></svg><span>Format Chart...</span></button>
      <button role="menuitem" class="last"><svg><use href="#i-publish"/></svg><span>Publish as Web Service</span></button>
    </div>
    <span class="mark-ring"></span>
  </figure>
</main>

<footer class="doc-footer">
  <div class="author">Obily B W</div>
  <div class="edition">
    <svg class="bracket" viewBox="0 0 20 160" aria-hidden="true"><path d="M14 4Q3 4 3 20V132Q3 148 14 148" fill="none" stroke="#f1f3f5" stroke-width="7"/><path d="M17 6v10q-5 0-6 8v117q-3-6-3-10V24Q8 8 17 6zM3 148l8 3h6v8Q7 158 3 148z" fill="#8f9fae"/></svg>
    <span>SAP Business Objects 4.0 SP02</span>
    <svg class="bracket" viewBox="0 0 20 160" aria-hidden="true"><path d="M2 4Q12 4 12 20V132Q12 148 2 148" fill="none" stroke="#f1f3f5" stroke-width="7"/><path d="M15 11q4 4 4 10v114q0 22-15 24v-7q11-3 11-14zM3 10l4 6h-4z" fill="#8496a9"/></svg>
  </div>
</footer>
</body>
</html>
```
FILE: styles.css
```css
* { box-sizing: border-box; }

body {
  margin: 0;
  background: #fff;
  color: #000;
  font-family: Lato, "Open Sans", sans-serif;
}

button {
  margin: 0;
  padding: 0;
  border: 0;
  background: none;
  color: inherit;
  font: inherit;
}

.defs { position: absolute; }

/* Document text */
.doc-header {
  padding: 116px 240px 0;
  color: #4f81bd;
  font: 46px/54px "Liberation Serif", serif;
  text-align: right;
  text-transform: uppercase;
}

.doc { padding: 0 236px 0 246px; }

.doc-title {
  margin: 70px 0 0 -5px;
  color: #365f91;
  font: bold 48px/60px "Liberation Serif", serif;
  text-decoration: underline;
  text-decoration-thickness: 3px;
  text-underline-offset: 5px;
}

.point {
  display: flex;
  align-items: center;
  gap: 26px;
  margin: 98px 0 0;
  padding-left: 59px;
  font-size: 43px;
  font-weight: 400;
  line-height: 50px;
}

.point-second { margin-top: 36px; }
.point-mark { width: 30px; height: 34px; }

/* Screen figures */
.shot {
  position: relative;
  max-width: 100%;
  margin: 38px 0 0;
  color: #333;
  font: 19px/22px "Liberation Sans", Arial, sans-serif;
}

.icon { display: block; width: 30px; height: 30px; flex: none; }

.caret {
  display: block;
  flex: none;
  width: 10px;
  height: 6px;
  background: #173a6b;
  clip-path: polygon(0 0, 100% 0, 50% 100%);
}

.window-edge {
  height: 12px;
  background: linear-gradient(#dfe7ef 0 1px, #6f87a6 1px 3px, #c3d2e3 3px 5px, #627b9e 5px 7px, #f0f4f8 7px 9px, #e0e7f0 9px);
}

.ribbon-row { display: flex; background: #d8e0ea; }

.side-edge {
  flex: none;
  width: 11px;
  margin: 2px 0 48px;
  background: linear-gradient(90deg, #b9c8d9 0 1px, #5f7ca1 1px 3px, #dbe3ec 3px);
}

.panel {
  flex: 1;
  min-width: 0;
  border: 2px solid #8497ba;
  border-right: 0;
  background: #d3dbe6;
}

.main-tabs {
  display: flex;
  justify-content: space-between;
  height: 48px;
  padding-left: 10px;
  border-bottom: 2px solid #7a8fb5;
  background: linear-gradient(#e3e9f1, #cbd5e2);
}

.panel-strip {
  height: 10px;
  background: linear-gradient(#fff 0 3px, #e4ebec 3px);
}

/* Tabs: an outline layer with a slanted left side, and a fill laid inside it */
.tablist { display: flex; align-items: flex-end; }

.tab {
  --cut: 18px;
  position: relative;
  z-index: 0;
  height: 28px;
  padding: 9px 14px 0 34px;
  color: #2d333c;
  line-height: 19px;
  white-space: nowrap;
  background: #8a9bbb;
  clip-path: polygon(var(--cut) 0, calc(100% - 3px) 0, 100% 3px, 100% 100%, 0 100%, 0 var(--cut));
}

.tab::before {
  content: "";
  position: absolute;
  z-index: -1;
  inset: 2px 2px 0 0;
  background: linear-gradient(#fff 0 2px, #cfd7e3 2px);
  clip-path: polygon(var(--cut) 0, 100% 0, 100% 100%, 0 100%, 0 calc(var(--cut) + 1px));
}

.tab.is-on {
  height: 30px;
  margin: 0 0 -2px 10px;
  padding: 9px 15px 2px 40px;
  background: #6f8cb4;
  clip-path: polygon(27px 0, calc(100% - 3px) 0, 100% 3px, 100% 100%, 0 100%);
}

.tab.is-on::before {
  inset: 2px 2px 0 3px;
  background: linear-gradient(#e3f2fc, #fff 8px);
  clip-path: polygon(26px 0, 100% 0, 100% 100%, 0 100%);
}

.tab.tab-main {
  --cut: 26px;
  height: 36px;
  padding: 12px 22px 4px 42px;
  background: linear-gradient(#7f93b5 50%, transparent);
}

.tab-main::before { background: linear-gradient(#fff 0 1px, #dde4ee 1px, #cdd7e3); }

.tab.tab-main.is-on {
  height: 38px;
  margin-left: 0;
  padding: 13px 18px 2px 50px;
  background: #6f8cb4;
  clip-path: polygon(37px 0, calc(100% - 3px) 0, 100% 3px, 100% 100%, 0 100%);
}

.tab-main.is-on::before {
  clip-path: polygon(36px 0, 100% 0, 100% 100%, 0 100%);
}

.tab.tab-cut { padding-left: 8px; clip-path: none; }
.tab-cut::before { clip-path: none; }

.modes {
  display: flex;
  align-items: center;
  padding-right: 3px;
  color: #163a70;
}

.mode { padding: 0 18px; }

.mode-on {
  height: 38px;
  margin-right: 6px;
  padding: 0 14px 0 4px;
  border: 1px solid #6aaed0;
  border-top: 2px solid #5a9cc4;
  background: linear-gradient(#e0f4fb, #b4def0 60%, #7cc4e4);
}

.mode-data { padding: 0 38px 0 22px; }
.util { display: flex; align-items: center; gap: 11px; margin-left: 12px; }

/* Ribbon groups */
.groups {
  display: flex;
  gap: 8px;
  height: 100px;
  padding: 7px 45px 0 7px;
  border-top: 2px solid #a0aecb;
  border-bottom: 2px solid #fff;
  background: linear-gradient(#d9dfe9, #d0dae5 60%, #d5dce8);
}

.group { position: relative; min-width: 0; }
.group-a { flex: 375 1 0; }
.group-b { flex: 291 1 0; }
.group-c { flex: 406 1 0; }

.group-body {
  display: flex;
  align-items: center;
  height: 58px;
  padding: 5px 8px 0 10px;
  border: 2px solid #8ca0c2;
  border-top-color: #7489b0;
  background: linear-gradient(#fff 0 3px, #8fa4c4 3px 5px, #e6e9f0 5px, #fff 40px);
}

.tool { display: flex; align-items: center; gap: 18px; flex: none; }
.tool + .tool { margin-left: 16px; }
.tool-text { gap: 8px; color: #173a70; white-space: nowrap; }
.tool-text.is-off { gap: 5px; color: #9c9c9e; }

.sep {
  flex: none;
  width: 2px;
  height: 27px;
  margin: 0 16px;
  background: #6f9ad0;
}

.group-style { padding-left: 6px; }
.group-style .tool { gap: 13px; }

.combo {
  display: flex;
  align-items: center;
  justify-content: space-between;
  flex: none;
  width: 117px;
  height: 43px;
  padding: 0 4px 0 10px;
  border: 2px solid #93a8ca;
  background: #fff;
}

.combo + .sep { margin: 0 14px 0 10px; }

.combo-focus {
  width: 114px;
  padding-right: 2px;
  outline: 1px dashed #60656c;
  outline-offset: -5px;
}

.palette { display: block; flex: none; width: 56px; height: 27px; }
.frame { fill: #fff; stroke: #000; stroke-width: 2; }
.frame-chosen { fill: #b9d3fb; }

.drop {
  width: 30px;
  height: 33px;
  background: linear-gradient(#f2f2f4, #dedfe3);
  color: #444;
  font-size: 13px;
  line-height: 33px;
  text-align: center;
}

.mark-box {
  position: absolute;
  inset: -11px -9px -24px -23px;
  border: 5px solid #f00;
  border-radius: 3px;
  pointer-events: none;
}

/* Formula bar */
.formula {
  display: flex;
  height: 56px;
  padding-top: 11px;
  background: linear-gradient(#cdd5e4, #e4e8ee 10px, #e6e9f0);
}

.formula-corner {
  flex: none;
  width: 21px;
  border-top: 2px solid #6e7486;
  border-right: 2px solid #6e7486;
  background: linear-gradient(#a9bad2, #8da3c6);
  box-shadow: inset -3px 3px #dfe6f0;
}

.formula-tools {
  display: flex;
  align-items: center;
  gap: 10px;
  flex: none;
  width: 176px;
  padding: 0 0 6px 19px;
}

.formula-input {
  flex: 1;
  min-width: 0;
  height: 45px;
  padding: 0 8px;
  border: 2px solid #98abcb;
  background: linear-gradient(#eef4f9, #fff 12px);
  font: inherit;
}

/* Palette list figure */
.shot-palette {
  width: 866px;
  margin-top: 33px;
  overflow: hidden;
}

.groups-cut {
  height: 99px;
  padding: 6px 0 0;
  border-top: 0;
  border-bottom: 2px solid #7085ac;
  box-shadow: inset 0 -3px #eef2f7;
}

.group-left { flex: 0 0 152px; }
.group-left .group-body { padding-left: 0; border-left: 0; gap: 16px; }
.group-left .group-body > .caret { margin-left: -4px; }
.group-mid { flex: 0 0 399px; }
.group-right { flex: 0 0 406px; }
.group-right .group-body { padding-left: 5px; }

.formula-cut {
  height: 62px;
  padding-top: 10px;
  padding-bottom: 5px;
  border-bottom: 2px solid #b3b0a6;
}

.formula-cut .formula-input { border-width: 2px 0; }

.chart { display: block; max-width: none; font: bold 23px "Liberation Sans", Arial, sans-serif; }
.scale { fill: #6a6a6c; text-anchor: end; }
.scale-s, .axis-name-s { font-size: 19px; }
.cats { fill: #6a6a6c; text-anchor: middle; }
.axis-name { fill: #000; }
.axis-name-x, .axis-name-y { font-size: 25px; }
.legend { fill: #6a6a6c; }

.dropdown {
  position: absolute;
  top: 87px;
  left: 574px;
  display: flex;
  width: 115px;
  border: 2px solid #2f64bc;
  background: #fff;
}

.options {
  flex: 1;
  min-width: 0;
  margin: 0;
  padding: 3px 0 3px 1px;
  overflow: hidden;
  list-style: none;
}

.options li {
  display: flex;
  gap: 6px;
  height: 39px;
  padding: 1px 0 0 5px;
}

.options span { padding-top: 6px; }
.options .chosen { background: #b9d3fb; }

.scrollbar {
  display: flex;
  flex-direction: column;
  flex: none;
  width: 30px;
  padding: 3px 2px 3px 1px;
}

.scroll-btn {
  height: 26px;
  background: linear-gradient(90deg, #f4f4f6, #dfe0e4);
  color: #444;
  font-size: 13px;
  line-height: 26px;
  text-align: center;
}

.scroll-track {
  display: flex;
  flex: 1;
  padding-top: 48px;
  background: #f1f2f5;
}

.scroll-thumb {
  display: flex;
  flex: 1;
  flex-direction: column;
  align-items: center;
  justify-content: center;
  gap: 3px;
  border: 1px solid #8f9fc4;
  background: linear-gradient(90deg, #f0f4fa, #c3cee0);
}

.scroll-thumb i { width: 14px; height: 2px; background: #8ba3c8; }
.grip { height: 28px; }

.tooltip {
  position: absolute;
  top: 402px;
  left: 654px;
  width: 191px;
  height: 37px;
  border: 2px solid #4a5568;
  background: linear-gradient(#c9d3e2, #f0f3f8);
  box-shadow: 1px 2px 2px #bbb;
  line-height: 36px;
  white-space: nowrap;
}

/* Context menu figure */
.shot-menu { width: 1258px; }

.hscroll {
  height: 36px;
  border-bottom: 2px solid #aba794;
  background: #f2f2f4;
}

.hscroll-thumb {
  display: block;
  width: 530px;
  height: 34px;
  border: 2px solid #9aa5c4;
  border-left: 0;
  background: linear-gradient(#f6f8fc, #cbd6e6 60%, #c4d0e2);
}

.statusbar {
  height: 42px;
  border-top: 3px solid #fff;
  background: linear-gradient(#6e7488 0 2px, #bec7d9 2px);
}

.menu {
  position: absolute;
  top: 11px;
  right: 3px;
  width: 554px;
  padding: 3px 0 1px;
  border: 2px solid #9fb0cf;
  background: linear-gradient(90deg, #e9eff7f2 0 72px, #c3dcf5 72px 74px, #f7f8fcf2 74px 480px, #eceef3f2 540px, #dcdfe4);
  box-shadow: 3px 5px #6a7180;
  backdrop-filter: blur(3px);
  color: #16387c;
  font-size: 23px;
  line-height: 28px;
}

.menu button {
  display: grid;
  grid-template-columns: 74px 1fr 127px;
  align-items: center;
  width: 100%;
  height: 59px;
  text-align: left;
}

.menu .plain { height: 55px; }
.menu .last { height: 61px; }
.menu svg { width: 34px; height: 34px; margin-left: 20px; }
.menu span { grid-column: 2; padding-left: 14px; white-space: nowrap; }
.menu kbd { color: #5577ab; font: inherit; }
.menu button:disabled, .menu button:disabled kbd { color: #9b9ba0; }
.menu hr { height: 3px; margin: 0 3px 0 81px; border: 0; border-bottom: 1px solid #fff; background: #c3dcf5; }

.menu .hover {
  height: 62px;
  background: linear-gradient(#f2fafd, #ddeff6 50%, #b9dcea);
}

.more {
  width: 11px;
  height: 12px;
  margin-left: 86px;
  background: #333;
  clip-path: polygon(0 0, 100% 50%, 0 100%);
}

.mark-ring {
  position: absolute;
  top: 775px;
  left: 681px;
  width: 335px;
  height: 85px;
  border: 6px solid #f00;
  border-radius: 50%;
  pointer-events: none;
}

/* Page footer */
.doc-footer {
  display: flex;
  align-items: flex-start;
  justify-content: space-between;
  margin-top: 148px;
  padding: 0 5px 32px 222px;
}

.author {
  width: 306px;
  padding: 0 0 9px 19px;
  border: solid #52a9c0;
  border-width: 3px 0;
  color: #31849b;
  font-size: 33px;
  font-weight: 700;
  line-height: 50px;
}

.edition {
  display: flex;
  align-items: center;
  justify-content: space-between;
  width: 620px;
  margin-top: 39px;
  color: #7f7f7f;
  font-size: 38px;
  font-style: italic;
  line-height: 44px;
}

.edition span { padding-top: 12px; }
.bracket { width: 20px; height: 160px; flex: none; }
```
